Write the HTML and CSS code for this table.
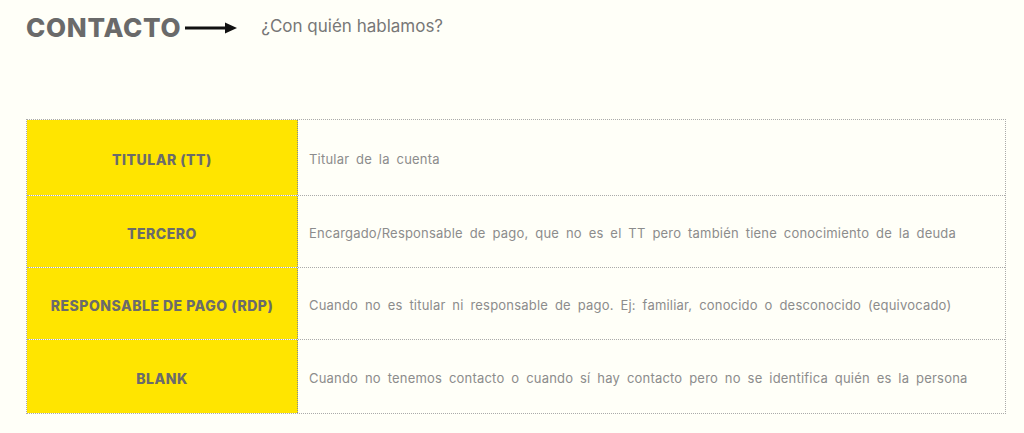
FILE: index.html
```html
<!DOCTYPE html>
<html lang="es">
<head>
<meta charset="utf-8">
<link rel="stylesheet" href="styles.css">
</head>
<body>
<header class="head">
  <h1 class="title">CONTACTO</h1>
  <svg class="arrow" width="52" height="12" viewBox="0 0 52 12"><path d="M0 6H42" stroke="#111" stroke-width="3"/><path d="M40 0.5L52 6L40 11.5Z" fill="#111"/></svg>
  <p class="subtitle">¿Con quién hablamos?</p>
</header>
<div class="table">
  <div class="row r1">
    <div class="label">TITULAR (TT)</div>
    <div class="desc">Titular de la cuenta</div>
  </div>
  <div class="row">
    <div class="label">TERCERO</div>
    <div class="desc">Encargado/Responsable de pago, que no es el TT pero también tiene conocimiento de la deuda</div>
  </div>
  <div class="row">
    <div class="label">RESPONSABLE DE PAGO (RDP)</div>
    <div class="desc">Cuando no es titular ni responsable de pago. Ej: familiar, conocido o desconocido (equivocado)</div>
  </div>
  <div class="row r4">
    <div class="label">BLANK</div>
    <div class="desc">Cuando no tenemos contacto o cuando sí hay contacto pero no se identifica quién es la persona</div>
  </div>
</div>
</body>
</html>
```
FILE: styles.css
```css
html, body { margin: 0; padding: 0; }
body {
  background: #fffff8;
  width: 1024px;
  height: 433px;
  overflow: hidden;
  font-family: "Inter", sans-serif;
}
.head {
  display: flex;
  align-items: center;
  padding: 12px 0 0 26px;
  height: 32px;
}
.title {
  margin: 0 0 2px;
  font-family: "Inter", sans-serif;
  font-weight: 800;
  font-size: 26px;
  letter-spacing: 0.7px;
  color: #6a6a6a;
}
.arrow { margin-left: 4px; }
.subtitle {
  margin: 0 0 0 24px;
  font-size: 17px;
  color: #777;
  padding-bottom: 4px;
}
.table {
  margin: 75px 0 0 26px;
  width: 980px;
  border: 1px dotted #aaa;
  box-sizing: border-box;
}
.row {
  display: flex;
  height: 71px;
}
.row + .row { border-top: 1px dotted #aaa; }
.r1 { height: 75px; }
.r4 { height: 73px; }
.label {
  width: 271px;
  flex: none;
  background: #ffe500;
  border-right: 1px dotted #888;
  display: flex;
  align-items: center;
  justify-content: center;
  padding-top: 3px;
  box-sizing: border-box;
  font-weight: 800;
  font-size: 14px;
  letter-spacing: 0.5px;
  color: #6b6b6b;
}
.desc {
  display: flex;
  align-items: center;
  padding: 3px 0 0 11px;
  font-size: 13px;
  color: #8c8c8c;
  letter-spacing: 0.2px;
  word-spacing: 3px;
}
```
